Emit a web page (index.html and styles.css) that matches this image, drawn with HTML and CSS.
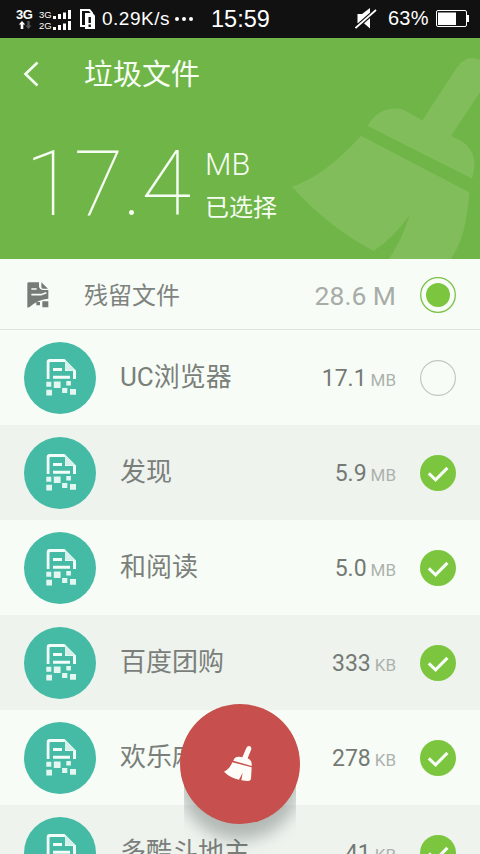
FILE: index.html
```html
<!DOCTYPE html>
<html lang="zh-CN">
<head>
<meta charset="utf-8">
<title>垃圾文件</title>
<link rel="stylesheet" href="styles.css">
</head>
<body>
<svg class="defs" width="0" height="0">
  <defs>
    <symbol id="file" viewBox="0 0 72 72">
      <path fill="#f2fcf8" d="M22.7 37V20a3 3 0 0 1 3-3H40.5L52 28.5V37H49V29H41V20H26.5a1 1 0 0 0-1 1V37zM29 26h9v3h-9zM29 33.7h17v3H29z"/>
      <path fill="#d5f1e9" d="M41 17.5 51.5 28.5H44a3 3 0 0 1-3-3z"/>
      <path fill="#e3f7f0" d="M22.3 39.7h5v5h-5zM29.8 39.6h6.8v6.4h-6.8zM42.3 39h4.6v4.5h-4.6zM38.1 46h5.2v5h-5.2zM46 47h6v5.8h-6zM22.3 47.8H28v5.7h-5.7z"/>
    </symbol>
    <symbol id="check" viewBox="0 0 36 36">
      <circle cx="18" cy="18" r="18" fill="#7cc53e"/>
      <path d="M8.8 18.4 15.6 24.8 27.4 12.8" fill="none" stroke="#f7fdf6" stroke-width="3.1"/>
    </symbol>
  </defs>
</svg>

<div class="status">
  <div class="net">
    <b>3G</b>
    <svg width="16" height="8" viewBox="0 0 16 8"><path fill="#fff" d="M5 0 8.2 3.5H6.3V8H3.7V3.5H1.8z"/><path fill="#555" d="M11.5 8 8.5 4.5h1.8V0h2.4v4.5h1.8z"/></svg>
  </div>
  <div class="signals">
    <div class="signal">3G<svg width="18" height="9" viewBox="0 0 18 9"><path fill="#fff" d="M0 6h3v3H0zM5 4h3v5H5zM10 2.5h3V9h-3zM15 0h3v9h-3z"/></svg></div>
    <div class="signal">2G<svg width="18" height="9" viewBox="0 0 18 9"><path fill="#fff" d="M0 6h3v3H0zM5 4h3v5H5zM10 2.5h3V9h-3zM15 0h3v9h-3z"/></svg></div>
  </div>
  <svg class="sim" width="16" height="20" viewBox="0 0 16 20"><path d="M1 1H9.5L12 4V17H1z" fill="none" stroke="#fff" stroke-width="2"/><path d="M5 4h7.5L15 6.5V20H5z" fill="#fff"/><path d="M8.5 8h2.4v6H8.5zM8.5 15.5h2.4V18H8.5z" fill="#111"/></svg>
  <span class="speed">0.29K/s</span>
  <span class="dots"><i></i><i></i><i></i></span>
  <span class="time">15:59</span>
  <svg class="mute" width="22" height="21" viewBox="0 0 22 21"><path d="M2.5 6H7L15 0V20.5L9 15.3H2.5z" fill="#fff"/><path d="M0 20.5 21 2" stroke="#111" stroke-width="4.2"/><path d="M.5 20 21 2" stroke="#fff" stroke-width="1.7"/></svg>
  <span class="percent">63%</span>
  <svg class="battery" width="33" height="17" viewBox="0 0 33 17"><rect x=".5" y=".5" width="30" height="16" rx="1.5" fill="none" stroke="#fff"/><path d="M2 2.5h18v12.5H2zM31 5h2v7h-2z" fill="#fff"/></svg>
</div>

<header class="hero">
  <svg class="bigbroom" width="200" height="219" viewBox="0 0 600 657">
    <path fill="#81bd5b" d="M427 241 530 83Q553 50 586 55L600 59V157L513 288 540 301Q602 338 576 416L263 258C284 213 338 194 378 213ZM243 287 568 457Q559 595 512 657H326Q367 598 389 525 340 594 281 633 150 565 35 440 133 408 243 287Z"/>
  </svg>
  <div class="titlebar">
    <svg width="16" height="26" viewBox="0 0 16 26"><path d="M14.5 1.5 2.5 13 14.5 24.5" fill="none" stroke="#f4fcf0" stroke-width="2.7"/></svg>
    <h1>垃圾文件</h1>
  </div>
  <div class="total">
    <span class="amount">17.4</span>
    <div class="caption"><span class="unit">MB</span><span class="chosen">已选择</span></div>
  </div>
</header>

<main>
  <div class="group">
    <svg class="groupicon" width="22" height="26" viewBox="0 0 66 78">
      <path fill="#777b77" d="M1 5Q1 1 5 1H36V13Q37 23 47 24H64V50Q35 51 8 75L1 77z"/>
      <path fill="#777b77" d="M43 1 63 20H48Q43 20 43 14zM28 60h11v10H28zM46 58h18v18H46z"/>
      <path d="M13 21H29M13 38H42L58 32" fill="none" stroke="#f7fdf6" stroke-width="5"/>
    </svg>
    <span class="groupname">残留文件</span>
    <span class="groupsize">28.6 M</span>
    <svg width="36" height="36" viewBox="0 0 36 36"><circle cx="18" cy="18" r="17.3" fill="none" stroke="#7cc04a" stroke-width="1.3"/><circle cx="18" cy="18" r="12" fill="#7cc53e"/></svg>
  </div>
  <div class="row"><span class="badge"><svg width="72" height="72"><use href="#file"/></svg></span><span class="name">UC浏览器</span><span class="size">17.1</span><span class="kind">MB</span><svg class="mark" width="36" height="36"><circle cx="18" cy="18" r="17.4" fill="none" stroke="#c3c7c3" stroke-width="1.2"/></svg></div>
  <div class="row"><span class="badge"><svg width="72" height="72"><use href="#file"/></svg></span><span class="name">发现</span><span class="size">5.9</span><span class="kind">MB</span><svg class="mark" width="36" height="36"><use href="#check"/></svg></div>
  <div class="row"><span class="badge"><svg width="72" height="72"><use href="#file"/></svg></span><span class="name">和阅读</span><span class="size">5.0</span><span class="kind">MB</span><svg class="mark" width="36" height="36"><use href="#check"/></svg></div>
  <div class="row"><span class="badge"><svg width="72" height="72"><use href="#file"/></svg></span><span class="name">百度团购</span><span class="size">333</span><span class="kind">KB</span><svg class="mark" width="36" height="36"><use href="#check"/></svg></div>
  <div class="row"><span class="badge"><svg width="72" height="72"><use href="#file"/></svg></span><span class="name">欢乐麻将</span><span class="size">278</span><span class="kind">KB</span><svg class="mark" width="36" height="36"><use href="#check"/></svg></div>
  <div class="row"><span class="badge"><svg width="72" height="72"><use href="#file"/></svg></span><span class="name">多酷斗地主</span><span class="size">41</span><span class="kind">KB</span><svg class="mark" width="36" height="36"><use href="#check"/></svg></div>
</main>

<div class="shade"><i></i></div>
<div class="fab">
  <svg width="120" height="120" viewBox="0 0 360 360">
    <path fill="#fffdf8" d="M187 160 199 132Q203 124 210 127 216 130 213 138L203 163Q217 169 215 186L160 170Q163 157 178 158ZM157 175 215 190 213 225Q211 232 202 231L184 229 188 206 177 227Q150 221 132 203 149 196 157 175Z"/>
  </svg>
</div>
</body>
</html>
```
FILE: styles.css
```css
* { box-sizing: border-box; }
html, body { margin: 0; height: 854px; overflow: hidden; }
body {
  position: relative;
  width: 480px;
  background: #f7fdf6;
  font-family: Roboto, "Noto Sans CJK SC", sans-serif;
}
svg { display: block; flex: none; }
.defs { position: absolute; }

.status {
  display: flex;
  height: 38px;
  padding-left: 16px;
  background: #111;
  color: #fff;
  font-family: "Liberation Sans", sans-serif;
  white-space: nowrap;
}
.net { width: 18px; margin-top: 8px; margin-right: 5px; }
.net b { display: block; font: bold 13px/13px "Liberation Sans", sans-serif; letter-spacing: -.6px; }
.net svg { margin-left: 1px; }
.signals { width: 34px; margin-top: 8px; }
.signal { display: flex; align-items: flex-end; height: 11px; font-size: 9.5px; line-height: 9px; }
.signal svg { margin-left: 1px; }
.sim { margin: 9px 6px 0 7px; }
.speed { width: 69px; font-size: 19px; line-height: 38px; letter-spacing: .5px; }
.dots { display: flex; gap: 3px; width: 20px; margin: 17px 0 0 4px; }
.dots i { width: 4px; height: 4px; border-radius: 2px; background: #fff; }
.time { width: 62px; margin-left: 16px; font-size: 23.5px; line-height: 38px; }
.mute { margin: 8px 11px 0 auto; }
.percent { width: 42px; font-size: 20px; line-height: 37px; letter-spacing: .2px; }
.battery { margin: 10px 11px 0 6px; }

.hero { position: relative; height: 221px; background: #6fb548; color: #f6fdf2; overflow: hidden; }
.bigbroom { position: absolute; right: 0; bottom: 0; }
.titlebar { display: flex; align-items: center; height: 72px; padding-left: 23px; }
.titlebar h1 { margin: 2px 0 0 45px; font-size: 29px; font-weight: 400; line-height: 40px; }
.total { display: flex; padding-left: 25px; }
.amount { width: 180px; font-size: 91px; font-weight: 100; line-height: 148px; height: 146px; letter-spacing: -1px; }
.caption { display: flex; flex-direction: column; padding-top: 36px; }
.unit { font-size: 30.5px; font-weight: 300; line-height: 38px; }
.chosen { font-size: 24px; line-height: 48px; }

.group {
  display: flex;
  align-items: center;
  height: 71px;
  padding: 0 24px 0 27px;
  border-bottom: 1px solid #e0e5e0;
}
.group > svg { margin-top: 2px; }
.group > .groupicon { margin: 2px 0 0; }
.groupname { flex: 1; margin-left: 35px; padding-top: 4px; color: #7f837f; font-size: 24px; line-height: 36px; }
.groupsize { margin-right: 24px; padding-top: 4px; color: #a8aca8; font-size: 26.5px; line-height: 34px; }

.row { display: flex; align-items: baseline; height: 95px; padding: 0 24px; }
.row:nth-child(odd) { background: #eef3ee; }
.badge { align-self: flex-start; width: 72px; height: 72px; margin: 12px 24px 0 0; border-radius: 50%; background: #45bba6; }
.name { flex: 1; color: #7b7f7b; font-size: 26px; line-height: 95px; }
.size { margin-bottom: 1px; color: #757975; font-size: 23px; }
.kind { margin-left: 4px; color: #adb1ad; font-size: 17px; }
.mark { align-self: flex-start; margin: 30px 0 0 24px; }

.shade { position: absolute; left: 184px; top: 764px; width: 112px; height: 90px; overflow: hidden; }
.shade i { display: block; width: 124px; height: 124px; margin: -48px 0 0 -6px; border-radius: 50%; background: rgba(40, 50, 45, .3); filter: blur(8px); }
.fab { position: absolute; left: 180px; top: 704px; width: 120px; height: 120px; border-radius: 50%; background: #c74f4d; }
```
